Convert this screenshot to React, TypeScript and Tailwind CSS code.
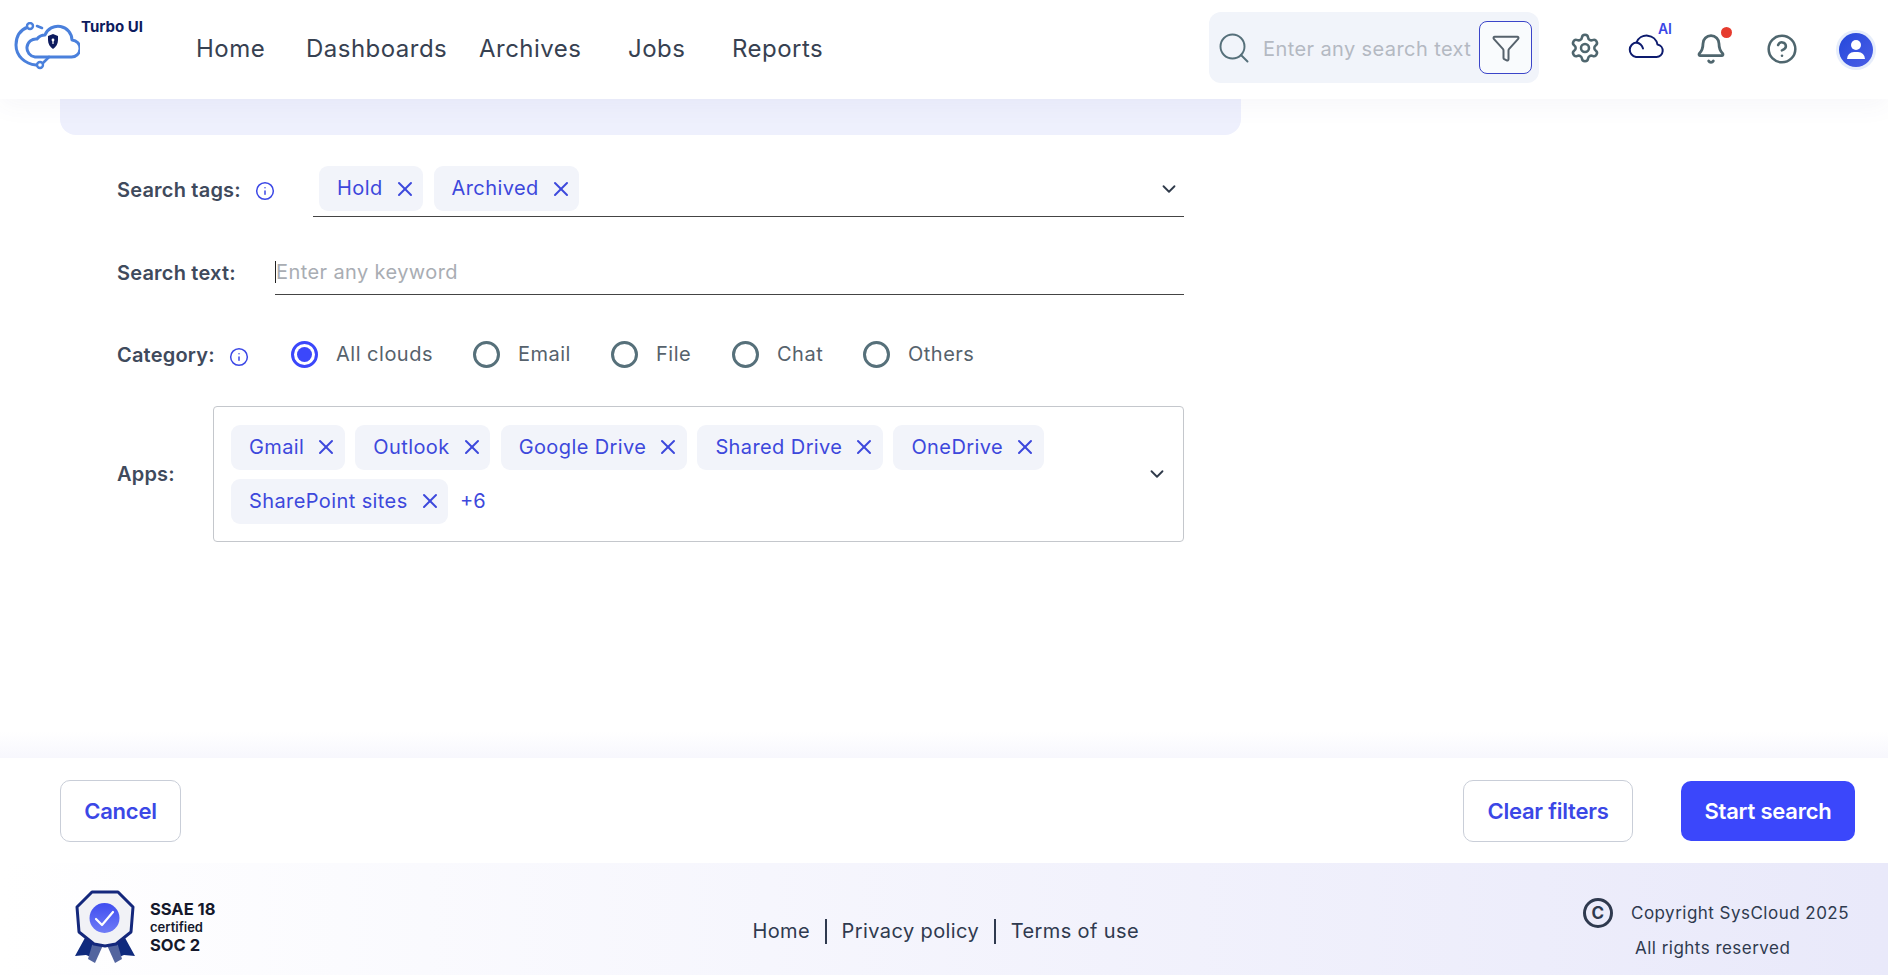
import { Bell, ChevronDown, CircleHelp, Funnel, Info, Search, Settings, X } from 'lucide-react';

const navItems = [
  { label: 'Home', width: 'w-[110px]' },
  { label: 'Dashboards', width: 'w-[173px]' },
  { label: 'Archives', width: 'w-[149px]' },
  { label: 'Jobs', width: 'w-[104px]' },
  { label: 'Reports', width: 'w-[100px]' },
];

const apps = ['Gmail', 'Outlook', 'Google Drive', 'Shared Drive', 'OneDrive'];
const categories = [
  { label: 'All clouds', width: 'w-[182px]', active: true },
  { label: 'Email', width: 'w-[138px]' },
  { label: 'File', width: 'w-[121px]' },
  { label: 'Chat', width: 'w-[131px]' },
  { label: 'Others', width: 'w-[120px]' },
];

function Logo() {
  return (
    <svg viewBox="14 22 66 48" className="w-[66px] h-[48px] shrink-0" fill="none">
      <path d="M35 57h36a8.5 8.5 0 0 0 1-17 14 14 0 0 0-27-5 10 10 0 0 0-8 4 9 9 0 0 0-2 18Z" stroke="#4a80dc" strokeWidth="3" strokeLinejoin="round" />
      <path d="M28 27C20 30 16 37 16 45c0 11 9 19 20 20" stroke="#4a80dc" strokeWidth="3" strokeLinecap="round" />
      <path d="M37 26l5 2M43 63l6-6" stroke="#4a80dc" strokeWidth="2.6" strokeLinecap="round" />
      <circle cx="30" cy="26" r="3" fill="#fff" stroke="#4a80dc" strokeWidth="2.4" />
      <circle cx="40" cy="65" r="3" fill="#fff" stroke="#4a80dc" strokeWidth="2.4" />
      <path d="M53 34l5 2v4c0 4-2 7-5 9-3-2-5-5-5-9v-4Z" fill="#0d1b5e" />
      <circle cx="53" cy="40" r="1.4" fill="#fff" />
      <path d="M53 41v3" stroke="#fff" strokeWidth="1.2" />
    </svg>
  );
}

function Badge() {
  return (
    <svg viewBox="0 0 60 73" className="w-[60px] h-[73px] shrink-0 mt-[14px]" fill="none">
      <path d="M11 46L0 66l11-1 5 2 8-17Z" fill="#0f2a7d" />
      <path d="M49 46l11 20-11-1-5 2-8-17Z" fill="#0f2a7d" />
      <path d="M18 52l-5 17 7 4 9-20Z" fill="#53659f" />
      <path d="M42 52l5 17-7 4-9-20Z" fill="#53659f" />
      <path d="M17 2h26l15 15-2 25-15 12-11 2-11-2L4 42 2 17Z" fill="#f1f2f6" stroke="#14287c" strokeWidth="3" strokeLinejoin="round" />
      <circle cx="29.500" cy="28" r="15" fill="url(#badge-fill)" />
      <path d="M21 29l6 6 11-13" stroke="#fff" strokeWidth="2.2" strokeLinecap="round" strokeLinejoin="round" />
      <defs>
        <linearGradient id="badge-fill" x1="0" y1="0" x2="0" y2="1">
          <stop offset="0" stopColor="#3f4df0" />
          <stop offset="1" stopColor="#6f7cf6" />
        </linearGradient>
      </defs>
    </svg>
  );
}

function Chip({ label, lift }: { label: string; lift?: boolean }) {
  return (
    <span className="inline-flex items-center h-[45px] pl-[18px] pr-[6.500px] gap-[10px] rounded-[9px] bg-[#f2f4fa] text-[#3d48dc] text-[20px] tracking-[0.02em]">
      <span className={lift ? 'pb-[2px]' : ''}>{label}</span>
      <X className="w-[24px] h-[24px]" strokeWidth={2} />
    </span>
  );
}

function Radio({ active }: { active?: boolean }) {
  if (active) {
    return (
      <span className="w-[27px] h-[27px] rounded-full border-[3px] border-[#3b47fb] flex items-center justify-center">
        <span className="w-[15px] h-[15px] rounded-full bg-[#3b47fb]" />
      </span>
    );
  }
  return <span className="w-[27px] h-[27px] rounded-full border-[3px] border-[#56707a]" />;
}

export default function App() {
  return (
    <div className="w-[1888px] h-[975px] overflow-hidden flex flex-col bg-white font-['Inter',sans-serif]">
      <header className="relative z-10 h-[99px] shrink-0 flex bg-white shadow-[0_6px_24px_rgba(70,80,140,0.05)]">
        <div className="flex items-start pl-[14px] pt-[22px] w-[196px] shrink-0">
          <Logo />
          <span className="text-[15px] font-bold text-[#0d1b5e] leading-[14px] ml-[1px] -mt-[2px]">Turbo UI</span>
        </div>
        <nav className="flex items-center pb-[2px] text-[24px] text-[#374151] tracking-[0.02em]">
          {navItems.map((item) => (
            <a key={item.label} className={item.width}>{item.label}</a>
          ))}
        </nav>
        <div className="ml-auto flex items-center pr-[12px]">
          <div className="w-[330px] h-[71px] mb-[4px] rounded-xl bg-[#f1f4fa] flex items-center pl-[7px] pr-[7px]">
            <Search className="w-[36px] h-[36px] text-[#56707a]" strokeWidth={1.3} />
            <span className="ml-[11px] pt-[2px] text-[20px] text-[#b4b9c2] tracking-[0.02em] whitespace-nowrap">Enter any search text</span>
            <button className="ml-auto w-[53px] h-[53px] rounded-lg border border-[#3b45c9] bg-white/60 flex items-center justify-center">
              <Funnel className="w-[30px] h-[30px] text-[#56626c]" strokeWidth={1.6} />
            </button>
          </div>
          <Settings className="ml-[30px] mb-[3px] w-[32px] h-[32px] text-[#4f666e]" strokeWidth={1.9} />
          <div className="relative ml-[26px] mb-[8px]">
            <svg viewBox="0 0 37 25" className="w-[37px] h-[25px]" fill="none" stroke="#0d1b6e" strokeWidth="2">
              <path d="M9 24H29.500a6.300 6.300 0 0 0 1-12.500 A11 11 0 0 0 9.500 9.500 A7.300 7.300 0 0 0 9 24Z" strokeLinejoin="round" />
              <path d="M9.500 9.500a8.500 8.500 0 0 1 6.500 6" strokeLinecap="round" />
            </svg>
            <span className="absolute -top-[11px] -right-[8px] text-[14px] leading-[14px] font-semibold text-[#3b47e6]">AI</span>
          </div>
          <div className="relative ml-[31px] mb-[2px]">
            <Bell className="w-[32px] h-[32px] text-[#4f666e]" strokeWidth={2.1} />
            <span className="absolute -top-[6px] -right-[5px] w-[11px] h-[11px] rounded-full bg-[#e63b2e]" />
          </div>
          <CircleHelp className="ml-[39px] mb-[2px] w-[32px] h-[32px] text-[#4f666e]" strokeWidth={1.9} />
          <div className="ml-[38px] w-[40px] h-[40px] rounded-full bg-[#e6edfb] flex items-center justify-center">
            <div className="w-[34px] h-[34px] rounded-full bg-linear-to-br from-[#2347db] to-[#4a5ee6] flex flex-col items-center justify-center">
              <span className="w-[10px] h-[10px] rounded-full bg-white" />
              <span className="mt-[2px] w-[18px] h-[7px] rounded-t-full rounded-b-[2px] bg-white" />
            </div>
          </div>
        </div>
      </header>

      <main className="flex-1 min-h-0 bg-linear-to-b from-white from-[96%] to-[#f7f7fd] pl-[60px]">
        <div className="w-[1181px] h-[36px] rounded-b-2xl bg-[#eef0fd]" />
        <div className="w-[1124px] pl-[57px] pt-[31px] text-[#3f4a5c]">
          <div className="flex h-[51px]">
            <div className="w-[196px] shrink-0 flex items-center gap-[14px] text-[20px] font-semibold tracking-[0.01em] pb-[4px]">
              Search tags:
              <Info className="w-[20px] h-[20px] mt-[3px] text-[#3b47e6]" strokeWidth={1.8} />
            </div>
            <div className="flex-1 flex items-start gap-[10.500px] border-b border-[#444] pl-[6px]">
              <Chip lift label="Hold" />
              <Chip lift label="Archived" />
              <ChevronDown className="ml-auto mr-[4px] mt-[12px] w-[22px] h-[22px] text-[#2f3a4a]" strokeWidth={2} />
            </div>
          </div>
          <div className="flex mt-[33px] h-[45px]">
            <div className="w-[158px] shrink-0 flex items-center text-[20px] font-semibold tracking-[0.01em]">Search text:</div>
            <div className="flex-1 flex items-center border-b border-[#444] text-[20px] text-[#a9adb3] tracking-[0.02em]">
              <span className="w-px h-[22px] bg-[#222]" />
              Enter any keyword
            </div>
          </div>
          <div className="flex items-center mt-[44px] h-[30px]">
            <div className="w-[174px] shrink-0 flex items-center gap-[14px] pt-[2px] text-[20px] font-semibold tracking-[0.01em]">
              Category:
              <Info className="w-[20px] h-[20px] mt-[3px] text-[#3b47e6]" strokeWidth={1.8} />
            </div>
            {categories.map((c) => (
              <label key={c.label} className={`${c.width} shrink-0 flex items-center gap-[18px] text-[20px] text-[#56626c] tracking-[0.025em]`}>
                <Radio active={c.active} />
                {c.label}
              </label>
            ))}
          </div>
          <div className="flex items-center mt-[37px]">
            <div className="w-[96px] shrink-0 text-[20px] font-semibold tracking-[0.01em]">Apps:</div>
            <div className="w-[971px] h-[136px] rounded-[4px] border border-[#c4c7cc] flex items-center pl-[17px] pr-[15px]">
              <div className="flex-1 flex flex-wrap gap-x-[10.500px] gap-y-[9px]">
                {apps.map((a) => <Chip key={a} label={a} />)}
                <div className="w-full flex items-center gap-[12px]">
                  <Chip label="SharePoint sites" />
                  <span className="text-[20px] text-[#3d48dc]">+6</span>
                </div>
              </div>
              <ChevronDown className="w-[22px] h-[22px] text-[#2f3a4a]" strokeWidth={2} />
            </div>
          </div>
        </div>
      </main>

      <div className="h-[105px] shrink-0 bg-white flex items-center pt-[1px] pl-[60px] pr-[33px] text-[22px] font-semibold tracking-[-0.01em]">
        <button className="w-[121px] h-[62px] rounded-[10px] border border-[#c9ced8] text-[#3b47e6]">Cancel</button>
        <button className="ml-auto w-[170px] h-[62px] rounded-[10px] border border-[#c9ced8] text-[#3b47e6]">Clear filters</button>
        <button className="ml-[48px] w-[174px] h-[60px] rounded-[10px] bg-[#3b47fb] text-white">Start search</button>
      </div>

      <footer className="h-[112px] shrink-0 bg-linear-to-r from-white to-[#e9e9fa] flex items-center pl-[75px] pr-[39px] text-[#2f3a4f]">
        <Badge />
        <div className="ml-[15px] mt-[14px] text-[#14182b] font-bold">
          <div className="text-[16.500px] leading-[20px]">SSAE 18</div>
          <div className="text-[13px] leading-[17px] font-semibold">certified</div>
          <div className="text-[16.500px] leading-[18px]">SOC 2</div>
        </div>
        <div className="ml-[537px] mt-[24px] flex items-center text-[20px] tracking-[0.02em]">
          Home
          <span className="w-[1.500px] h-[25px] bg-[#2f3a4f] mx-[15px]" />
          Privacy policy
          <span className="w-[1.500px] h-[25px] bg-[#2f3a4f] mx-[15px]" />
          Terms of use
        </div>
        <div className="ml-auto mt-[22px] flex flex-col text-[17px] tracking-[0.028em]">
          <div className="flex items-center gap-[18px]">
            <span className="w-[30px] h-[30px] rounded-full border-[3px] border-[#2f3a4f] flex items-center justify-center text-[17px] font-bold">C</span>
            Copyright SysCloud 2025
          </div>
          <div className="ml-[52px] mt-[8px]">All rights reserved</div>
        </div>
      </footer>
    </div>
  );
}
